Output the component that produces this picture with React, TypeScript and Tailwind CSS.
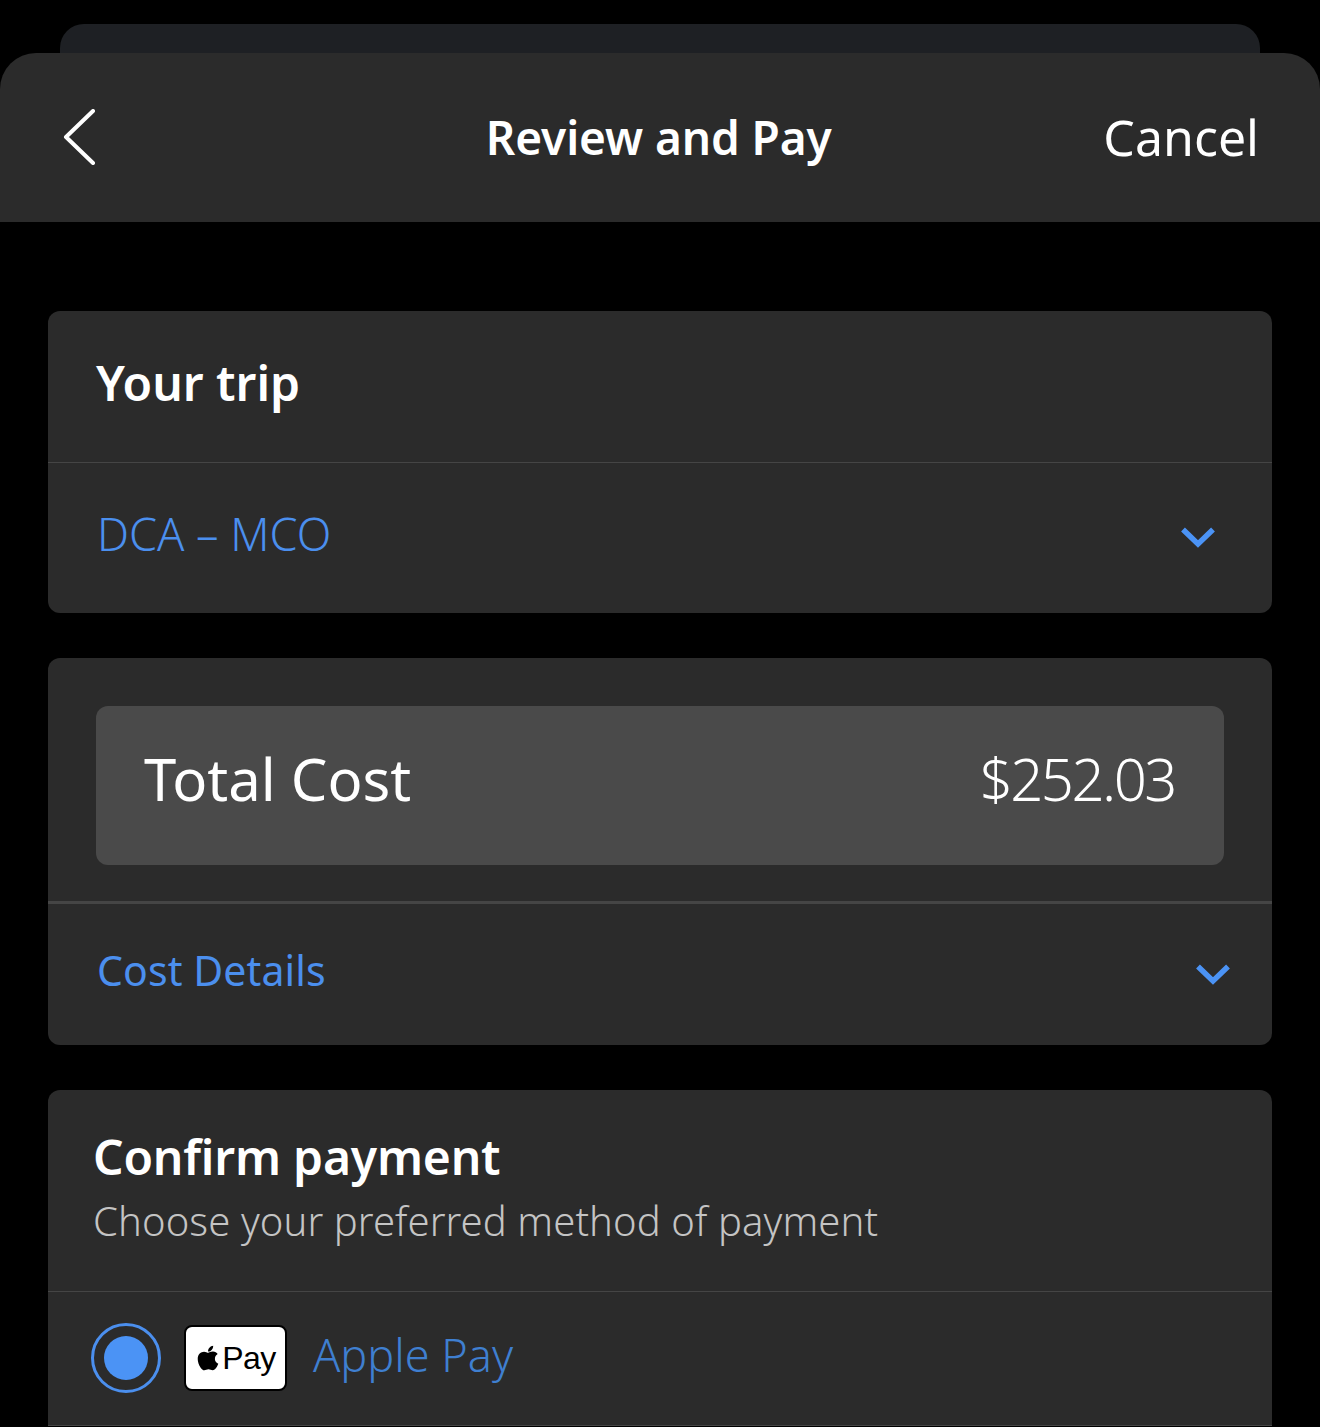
import React from 'react';
import { FaApple } from 'react-icons/fa';

const Chevron = () => (
  <svg width="36" height="24" viewBox="0 0 36 24" fill="none" className="mt-[5px]">
    <path d="M3 5.5 L18 20 L33 5.5" stroke="#4b93f5" strokeWidth="5.5" />
  </svg>
);

const App: React.FC = () => {
  return (
    <div className="h-[1427px] w-[1320px] overflow-hidden bg-black pt-6 font-['Noto_Sans',sans-serif] text-white">
      <div className="mx-[60px] h-[29px] rounded-t-[24px] bg-[#1e2024]" />

      <header className="flex h-[169px] items-center justify-between rounded-t-[36px] bg-[#2b2b2b] pb-[2px] pl-[62px] pr-[61px]">
        <svg width="36" height="56" viewBox="0 0 36 56" fill="none" className="mr-[116px]">
          <path d="M31 2 L4 28 L31 54" stroke="#fff" strokeWidth="4" strokeLinecap="round" strokeLinejoin="round" />
        </svg>
        <h1 className="text-[46px] font-semibold leading-none tracking-[-0.1px]">Review and Pay</h1>
        <button className="text-[50px] leading-none">Cancel</button>
      </header>

      <main className="mt-[89px] flex flex-col gap-[45px] px-12">
        <section className="h-[302px] rounded-xl bg-[#2b2b2b]">
          <div className="flex h-[152px] items-center border-b border-[#454545] pb-[8px] pl-[48px]">
            <h2 className="text-[48px] font-semibold leading-none">Your trip</h2>
          </div>
          <div className="flex h-[150px] items-center justify-between pb-[10px] pl-[49px] pr-[56px]">
            <span className="text-[45px] font-light leading-none text-[#4b8fee]">DCA – MCO</span>
            <Chevron />
          </div>
        </section>

        <section className="h-[387px] rounded-xl bg-[#2b2b2b]">
          <div className="flex h-[246px] items-start border-b-[3px] border-[#454545] px-12 pt-12">
            <div className="flex h-[159px] w-full items-center justify-between rounded-xl bg-[#4a4a4a] pb-[14px] pl-12 pr-[49px]">
              <span className="text-[58px] leading-none">Total Cost</span>
              <span className="text-[58px] font-light leading-none tracking-[-2.5px]">$252.03</span>
            </div>
          </div>
          <div className="flex h-[141px] items-center justify-between pb-[8px] pl-[49px] pr-[41px]">
            <span className="text-[41px] leading-none tracking-[0.1px] text-[#4b8fee]">Cost Details</span>
            <Chevron />
          </div>
        </section>

        <section className="rounded-t-xl bg-[#2b2b2b]">
          <div className="flex h-[202px] flex-col border-b border-[#454545] pl-[45px] pt-[38px]">
            <h2 className="text-[48px] font-semibold leading-[58px] tracking-[-0.2px]">Confirm payment</h2>
            <p className="mt-[10px] text-[40px] font-light leading-[50px] tracking-[0.1px] text-[#c4c4c4]">Choose your preferred method of payment</p>
          </div>
          <div className="flex h-[134px] items-center border-b border-[#454545] pb-[2px] pl-[43px]">
            <div className="flex h-[70px] w-[70px] items-center justify-center rounded-full border-[3px] border-[#4b8fee]">
              <div className="h-[44px] w-[44px] rounded-full bg-[#4b93f5]" />
            </div>
            <div className="ml-[23px] flex h-[66px] w-[103px] items-center justify-center rounded-lg border-[2px] border-black bg-white pr-[1px] text-black">
              <FaApple className="h-[28px] w-[28px]" />
              <span className="font-['Liberation_Sans',sans-serif] text-[32px] leading-none tracking-[-0.5px]">Pay</span>
            </div>
            <span className="ml-[26px] pb-[6px] text-[45px] font-light leading-none text-[#3f7fd0]">Apple Pay</span>
          </div>
        </section>
      </main>
    </div>
  );
};

export default App;
